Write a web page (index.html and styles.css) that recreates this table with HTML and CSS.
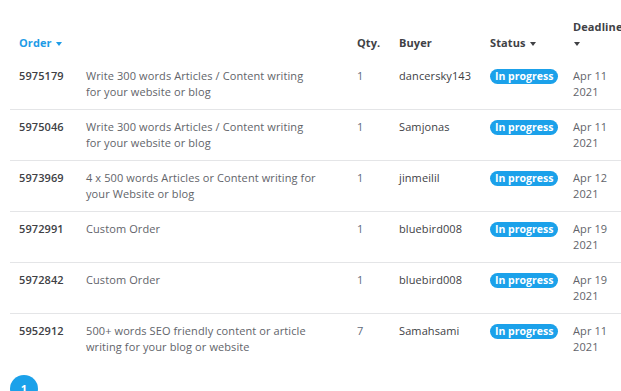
FILE: index.html
```html
<!DOCTYPE html>
<html lang="en">
<head>
    <meta charset="UTF-8">
    <meta name="viewport" content="width=device-width, initial-scale=1.0">
    <title>Active Orders</title>
    <link rel="stylesheet" href="styles.css">
</head>
<body>
    <div class="orders">
        <table class="orders-table">
            <colgroup>
                <col class="col-order">
                <col class="col-title">
                <col class="col-qty">
                <col class="col-buyer">
                <col class="col-status">
                <col class="col-deadline">
            </colgroup>
            <thead>
                <tr>
                    <th class="sorted">Order <span class="caret"></span></th>
                    <th></th>
                    <th>Qty.</th>
                    <th>Buyer</th>
                    <th>Status <span class="caret"></span></th>
                    <th class="deadline">Deadline <span class="caret"></span></th>
                </tr>
            </thead>
            <tbody>
                <tr>
                    <td class="order-id">5975179</td>
                    <td class="title">Write 300 words Articles / Content writing for your website or blog</td>
                    <td class="qty">1</td>
                    <td class="buyer">dancersky143</td>
                    <td><span class="badge">In progress</span></td>
                    <td class="date">Apr 11 2021</td>
                </tr>
                <tr>
                    <td class="order-id">5975046</td>
                    <td class="title">Write 300 words Articles / Content writing for your website or blog</td>
                    <td class="qty">1</td>
                    <td class="buyer">Samjonas</td>
                    <td><span class="badge">In progress</span></td>
                    <td class="date">Apr 11 2021</td>
                </tr>
                <tr>
                    <td class="order-id">5973969</td>
                    <td class="title">4 x 500 words Articles or Content writing for your Website or blog</td>
                    <td class="qty">1</td>
                    <td class="buyer">jinmeilil</td>
                    <td><span class="badge">In progress</span></td>
                    <td class="date">Apr 12 2021</td>
                </tr>
                <tr>
                    <td class="order-id">5972991</td>
                    <td class="title">Custom Order</td>
                    <td class="qty">1</td>
                    <td class="buyer">bluebird008</td>
                    <td><span class="badge">In progress</span></td>
                    <td class="date">Apr 19 2021</td>
                </tr>
                <tr>
                    <td class="order-id">5972842</td>
                    <td class="title">Custom Order</td>
                    <td class="qty">1</td>
                    <td class="buyer">bluebird008</td>
                    <td><span class="badge">In progress</span></td>
                    <td class="date">Apr 19 2021</td>
                </tr>
                <tr>
                    <td class="order-id">5952912</td>
                    <td class="title">500+ words SEO friendly content or article writing for your blog or website</td>
                    <td class="qty">7</td>
                    <td class="buyer">Samahsami</td>
                    <td><span class="badge">In progress</span></td>
                    <td class="date">Apr 11 2021</td>
                </tr>
            </tbody>
        </table>
        <div class="pagination">
            <span class="page current">1</span>
        </div>
    </div>
</body>
</html>
```

FILE: styles.css
```css
body {
    margin: 0;
    overflow: hidden;
    background-color: #fff;
    font-family: "Open Sans", "Noto Sans", sans-serif;
    font-size: 11px;
    letter-spacing: 0.1px;
    color: #62646a;
}
.orders {
    padding-left: 10px;
}
.orders-table {
    width: 611px;
    border-collapse: collapse;
    table-layout: fixed;
}
.col-order { width: 67px; }
.col-title { width: 271px; }
.col-qty { width: 42px; }
.col-buyer { width: 91px; }
.col-status { width: 83px; }
.col-deadline { width: 57px; }
.orders-table th {
    text-align: left;
    vertical-align: bottom;
    padding: 19px 9px 8px;
    line-height: 16px;
    font-weight: 700;
    color: #404145;
    white-space: nowrap;
}
.orders-table th.deadline {
    white-space: normal;
    padding-right: 9px;
}
.orders-table th.sorted {
    color: #1d9be6;
}
.caret {
    display: inline-block;
    width: 0;
    height: 0;
    border-left: 3px solid transparent;
    border-right: 3px solid transparent;
    border-top: 4px solid currentColor;
    vertical-align: middle;
    margin-left: 1px;
}
.orders-table td {
    vertical-align: top;
    padding: 9px;
    line-height: 16px;
    border-bottom: 1px solid #e4e5e7;
}
.orders-table tbody tr:last-child td {
    border-bottom: none;
}
.orders-table td.title {
    padding-right: 30px;
}
.orders-table td.date {
    padding-right: 9px;
}
.order-id {
    font-weight: 600;
    color: #404145;
}
.buyer {
    color: #404145;
}
.qty {
    color: #5f6b7c;
}
.badge {
    display: inline-block;
    white-space: nowrap;
    background-color: #1ba1ea;
    color: #fff;
    font-weight: 700;
    font-size: 10.5px;
    letter-spacing: 0;
    line-height: 15px;
    padding: 0 5px;
    border-radius: 8px;
}
.pagination {
    padding-top: 11px;
}
.page {
    display: inline-block;
    width: 28px;
    height: 28px;
    line-height: 28px;
    border-radius: 50%;
    text-align: center;
    font-weight: 700;
    color: #fff;
}
.page.current {
    background-color: #1ba1ea;
}
```
